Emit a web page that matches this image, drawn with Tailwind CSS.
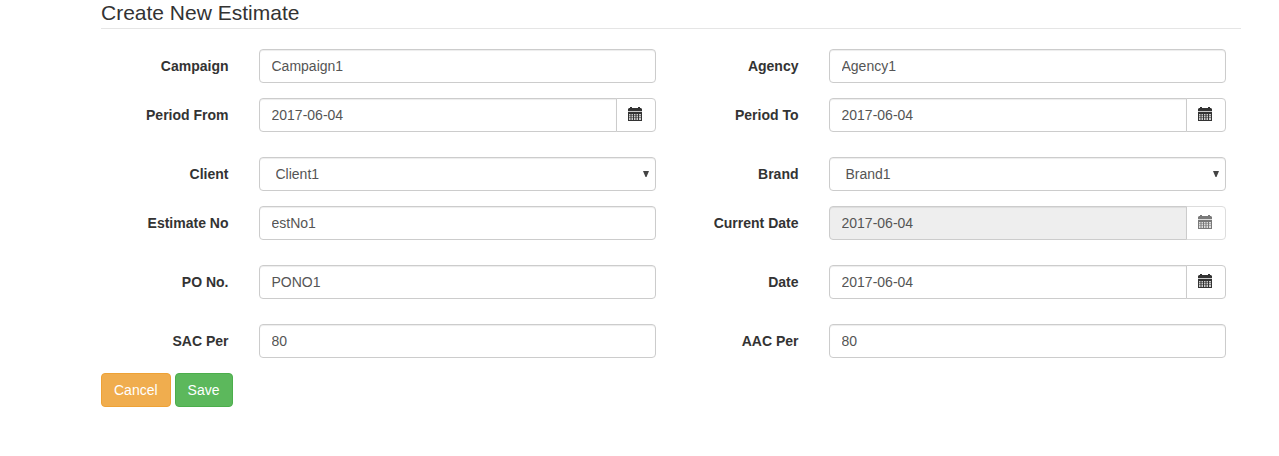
<!DOCTYPE html>
<html lang="en">
<head>
<meta charset="utf-8">
<title>Create New Estimate</title>
<script src="https://cdn.jsdelivr.net/npm/@tailwindcss/browser@4"></script>
</head>
<body class="bg-white font-['Liberation_Sans',Arial,sans-serif] text-sm leading-5 text-[#333]">
<svg class="hidden" aria-hidden="true">
  <symbol id="calendar" viewBox="0 0 14 14">
    <path fill="currentColor" d="M2 0h2v1h6V0h2v1h1l1 1v2H0V2l1-1h1zM0 5h14v9H0z"/>
    <path fill="currentColor" opacity=".25" d="M0 4h14v1H0z"/>
    <path fill="#fff" opacity=".75" d="M1 7h1.500v1.500H1zM3.500 7H5v1.500H3.500zM6 7h1.500v1.500H6zM8.500 7H10v1.500H8.500zM11 7h2v1.500h-2zM1 9h1.500v1.500H1zM3.500 9H5v1.500H3.500zM6 9h1.500v1.500H6zM8.500 9H10v1.500H8.500zM11 9h2v1.500h-2zM1 11h1.500v2H1zM3.500 11H5v2H3.500zM6 11h1.500v2H6zM8.500 11H10v2H8.500zM11 11h2v2h-2z"/>
  </symbol>
</svg>
<form class="ml-[101px] mr-[38px]">
  <h1 class="mb-5 border-b border-[#e5e5e5] pb-[3px] text-[21px] leading-[25px]">Create New Estimate</h1>

  <div class="mb-[15px] grid grid-cols-2">
    <div class="flex items-center">
      <label for="campaign" class="w-1/4 px-[15px] text-right font-bold">Campaign</label>
      <div class="w-3/4 px-[15px]"><input id="campaign" value="Campaign1" class="block h-[34px] w-full rounded border border-[#ccc] px-3 text-[#555] shadow-[inset_0_1px_1px_rgba(0,0,0,0.075)]"></div>
    </div>
    <div class="flex items-center">
      <label for="agency" class="w-1/4 px-[15px] text-right font-bold">Agency</label>
      <div class="w-3/4 px-[15px]"><input id="agency" value="Agency1" class="block h-[34px] w-full rounded border border-[#ccc] px-3 text-[#555] shadow-[inset_0_1px_1px_rgba(0,0,0,0.075)]"></div>
    </div>
  </div>

  <div class="mb-[25px] grid grid-cols-2">
    <div class="flex items-center">
      <label for="from" class="w-1/4 px-[15px] text-right font-bold">Period From</label>
      <div class="flex w-3/4 px-[15px]">
        <input id="from" value="2017-06-04" class="h-[34px] min-w-0 flex-1 rounded-l border border-[#ccc] px-3 text-[#555] shadow-[inset_0_1px_1px_rgba(0,0,0,0.075)]">
        <button type="button" aria-label="Choose start date" class="-ml-px flex h-[34px] w-10 rounded-r border border-[#ccc] bg-white pl-[11px] pt-2"><svg class="size-3.5"><use href="#calendar"/></svg></button>
      </div>
    </div>
    <div class="flex items-center">
      <label for="to" class="w-1/4 px-[15px] text-right font-bold">Period To</label>
      <div class="flex w-3/4 px-[15px]">
        <input id="to" value="2017-06-04" class="h-[34px] min-w-0 flex-1 rounded-l border border-[#ccc] px-3 text-[#555] shadow-[inset_0_1px_1px_rgba(0,0,0,0.075)]">
        <button type="button" aria-label="Choose end date" class="-ml-px flex h-[34px] w-10 rounded-r border border-[#ccc] bg-white pl-[11px] pt-2"><svg class="size-3.5"><use href="#calendar"/></svg></button>
      </div>
    </div>
  </div>

  <div class="mb-[15px] grid grid-cols-2">
    <div class="flex items-center">
      <label for="client" class="w-1/4 px-[15px] text-right font-bold">Client</label>
      <div class="w-3/4 px-[15px]">
        <div class="relative">
          <select id="client" class="block h-[34px] w-full appearance-none rounded border border-[#ccc] bg-white px-4 text-[#555] shadow-[inset_0_1px_1px_rgba(0,0,0,0.075)]"><option>Client1</option></select>
          <svg class="pointer-events-none absolute right-[7px] top-3.5 h-[6px] w-[6px]" viewBox="0 0 6 6" aria-hidden="true"><path fill="#444" d="M0 0h6L3.500 6h-1z"/></svg>
        </div>
      </div>
    </div>
    <div class="flex items-center">
      <label for="brand" class="w-1/4 px-[15px] text-right font-bold">Brand</label>
      <div class="w-3/4 px-[15px]">
        <div class="relative">
          <select id="brand" class="block h-[34px] w-full appearance-none rounded border border-[#ccc] bg-white px-4 text-[#555] shadow-[inset_0_1px_1px_rgba(0,0,0,0.075)]"><option>Brand1</option></select>
          <svg class="pointer-events-none absolute right-[7px] top-3.5 h-[6px] w-[6px]" viewBox="0 0 6 6" aria-hidden="true"><path fill="#444" d="M0 0h6L3.500 6h-1z"/></svg>
        </div>
      </div>
    </div>
  </div>

  <div class="mb-[25px] grid grid-cols-2">
    <div class="flex items-center">
      <label for="estimate" class="w-1/4 px-[15px] text-right font-bold">Estimate No</label>
      <div class="w-3/4 px-[15px]"><input id="estimate" value="estNo1" class="block h-[34px] w-full rounded border border-[#ccc] px-3 text-[#555] shadow-[inset_0_1px_1px_rgba(0,0,0,0.075)]"></div>
    </div>
    <div class="flex items-center">
      <label for="current" class="w-1/4 px-[15px] text-right font-bold">Current Date</label>
      <div class="flex w-3/4 px-[15px]">
        <input id="current" value="2017-06-04" disabled class="z-10 h-[34px] min-w-0 flex-1 rounded-l border border-[#ccc] bg-[#eee] px-3 text-[#555] shadow-[inset_0_1px_1px_rgba(0,0,0,0.075)]">
        <button type="button" disabled aria-label="Choose current date" class="-ml-px flex h-[34px] w-10 rounded-r border border-[#ccc] bg-white pl-[11px] pt-2 opacity-65"><svg class="size-3.5"><use href="#calendar"/></svg></button>
      </div>
    </div>
  </div>

  <div class="mb-[25px] grid grid-cols-2">
    <div class="flex items-center">
      <label for="po" class="w-1/4 px-[15px] text-right font-bold">PO No.</label>
      <div class="w-3/4 px-[15px]"><input id="po" value="PONO1" class="block h-[34px] w-full rounded border border-[#ccc] px-3 text-[#555] shadow-[inset_0_1px_1px_rgba(0,0,0,0.075)]"></div>
    </div>
    <div class="flex items-center">
      <label for="date" class="w-1/4 px-[15px] text-right font-bold">Date</label>
      <div class="flex w-3/4 px-[15px]">
        <input id="date" value="2017-06-04" class="h-[34px] min-w-0 flex-1 rounded-l border border-[#ccc] px-3 text-[#555] shadow-[inset_0_1px_1px_rgba(0,0,0,0.075)]">
        <button type="button" aria-label="Choose date" class="-ml-px flex h-[34px] w-10 rounded-r border border-[#ccc] bg-white pl-[11px] pt-2"><svg class="size-3.5"><use href="#calendar"/></svg></button>
      </div>
    </div>
  </div>

  <div class="mb-[15px] grid grid-cols-2">
    <div class="flex items-center">
      <label for="sac" class="w-1/4 px-[15px] text-right font-bold">SAC Per</label>
      <div class="w-3/4 px-[15px]"><input id="sac" value="80" class="block h-[34px] w-full rounded border border-[#ccc] px-3 text-[#555] shadow-[inset_0_1px_1px_rgba(0,0,0,0.075)]"></div>
    </div>
    <div class="flex items-center">
      <label for="aac" class="w-1/4 px-[15px] text-right font-bold">AAC Per</label>
      <div class="w-3/4 px-[15px]"><input id="aac" value="80" class="block h-[34px] w-full rounded border border-[#ccc] px-3 text-[#555] shadow-[inset_0_1px_1px_rgba(0,0,0,0.075)]"></div>
    </div>
  </div>

  <div class="flex gap-1">
    <button type="button" class="h-[34px] rounded border border-[#eea236] bg-[#f0ad4e] px-3 text-white">Cancel</button>
    <button type="submit" class="h-[34px] rounded border border-[#4cae4c] bg-[#5cb85c] px-3 text-white">Save</button>
  </div>
</form>
</body>
</html>
